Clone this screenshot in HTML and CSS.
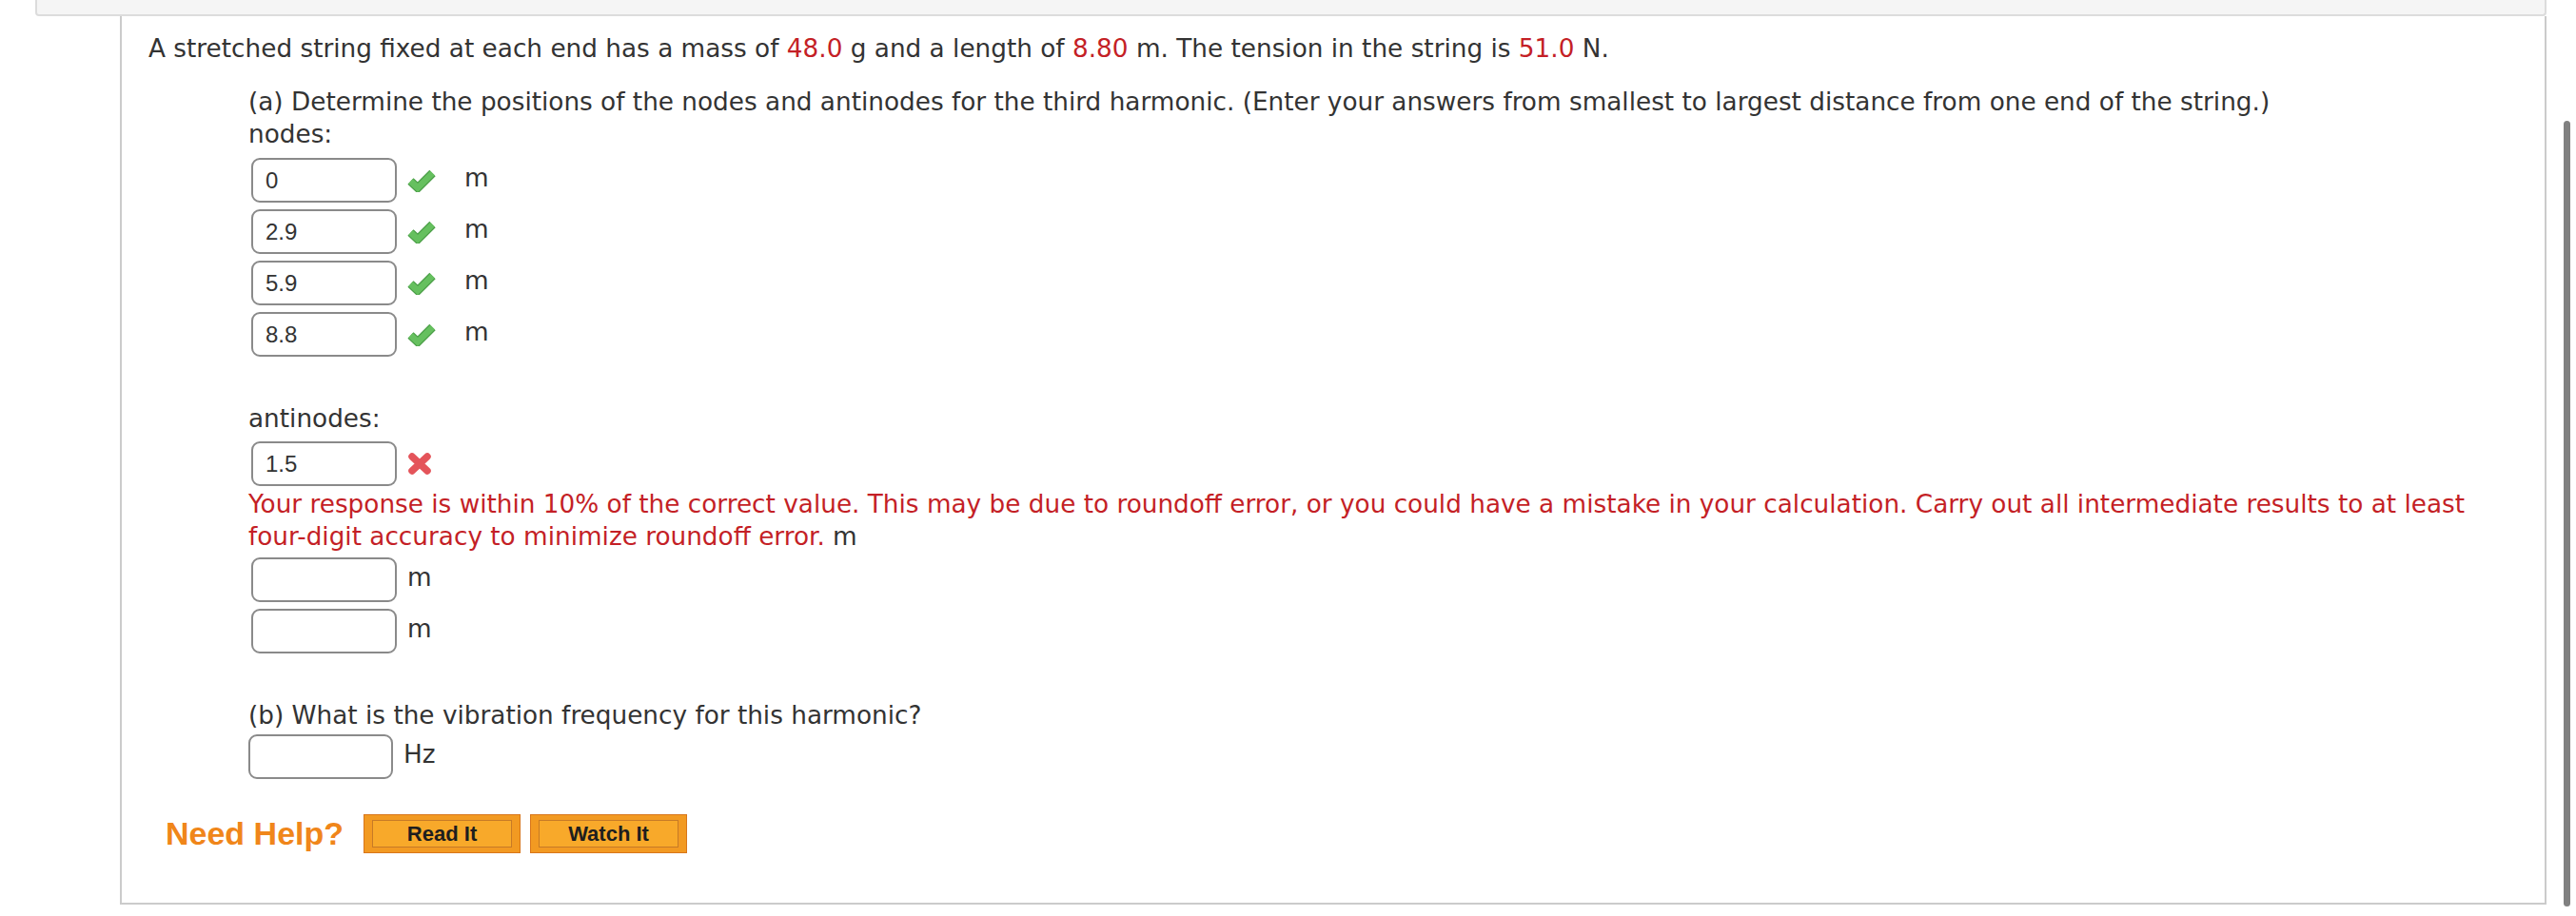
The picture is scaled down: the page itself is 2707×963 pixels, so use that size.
FILE: index.html
```html
<!DOCTYPE html>
<html lang="en">
<head>
    <meta charset="UTF-8">
    <meta name="viewport" content="width=device-width, initial-scale=1.0">
    <title>String Harmonics</title>
    <link rel="stylesheet" href="styles.css">
</head>
<body>
    <div class="topbar"></div>

    <div class="panel">
        <p class="stem">A stretched string fixed at each end has a mass of <span class="num">48.0</span> g and a length of <span class="num">8.80</span> m. The tension in the string is <span class="num">51.0</span> N.</p>

        <div class="part">
            <p>(a) Determine the positions of the nodes and antinodes for the third harmonic. (Enter your answers from smallest to largest distance from one end of the string.)</p>
            <p>nodes:</p>
            <div class="answers">
                <div class="answer">
                    <input class="box" type="text" value="0" readonly>
                    <svg class="mark" width="30" height="24" viewBox="0 0 30 24"><path d="M3.5 12.5 L11 19.5 L26.5 4" fill="none" stroke="#4b9e47" stroke-width="9"/><path d="M3.5 12.5 L11 19.5 L26.5 4" fill="none" stroke="#66c05f" stroke-width="6.5"/></svg>
                    <span class="unit wide">m</span>
                </div>
                <div class="answer">
                    <input class="box" type="text" value="2.9" readonly>
                    <svg class="mark" width="30" height="24" viewBox="0 0 30 24"><path d="M3.5 12.5 L11 19.5 L26.5 4" fill="none" stroke="#4b9e47" stroke-width="9"/><path d="M3.5 12.5 L11 19.5 L26.5 4" fill="none" stroke="#66c05f" stroke-width="6.5"/></svg>
                    <span class="unit wide">m</span>
                </div>
                <div class="answer">
                    <input class="box" type="text" value="5.9" readonly>
                    <svg class="mark" width="30" height="24" viewBox="0 0 30 24"><path d="M3.5 12.5 L11 19.5 L26.5 4" fill="none" stroke="#4b9e47" stroke-width="9"/><path d="M3.5 12.5 L11 19.5 L26.5 4" fill="none" stroke="#66c05f" stroke-width="6.5"/></svg>
                    <span class="unit wide">m</span>
                </div>
                <div class="answer">
                    <input class="box" type="text" value="8.8" readonly>
                    <svg class="mark" width="30" height="24" viewBox="0 0 30 24"><path d="M3.5 12.5 L11 19.5 L26.5 4" fill="none" stroke="#4b9e47" stroke-width="9"/><path d="M3.5 12.5 L11 19.5 L26.5 4" fill="none" stroke="#66c05f" stroke-width="6.5"/></svg>
                    <span class="unit wide">m</span>
                </div>
            </div>

            <p class="label">antinodes:</p>
            <div class="answer first">
                <input class="box" type="text" value="1.5" readonly>
                <svg class="mark" width="26" height="25" viewBox="0 0 26 25"><path d="M5 5 L21 20 M21 5 L5 20" fill="none" stroke="#e4545a" stroke-width="7.5" stroke-linecap="round"/></svg>
            </div>
            <p class="feedback">Your response is within 10% of the correct value. This may be due to roundoff error, or you could have a mistake in your calculation. Carry out all intermediate results to at least<br>four-digit accuracy to minimize roundoff error. <span class="plain">m</span></p>
            <div class="answers after-feedback">
                <div class="answer">
                    <input class="box" type="text" value="">
                    <span class="unit">m</span>
                </div>
                <div class="answer">
                    <input class="box" type="text" value="">
                    <span class="unit">m</span>
                </div>
            </div>

            <p class="label">(b) What is the vibration frequency for this harmonic?</p>
            <div class="answer hz">
                <input class="box" type="text" value="">
                <span class="unit">Hz</span>
            </div>
        </div>

        <div class="help">
            <span class="need-help">Need Help?</span>
            <button class="help-btn"><span>Read It</span></button>
            <button class="help-btn"><span>Watch It</span></button>
        </div>
    </div>

    <div class="scrollbar"></div>
</body>
</html>
```

FILE: styles.css
```css
/* Reset and base styles */
* {
    margin: 0;
    padding: 0;
    box-sizing: border-box;
}

body {
    font-family: "DejaVu Sans", Verdana, sans-serif;
    font-size: 26.3px;
    line-height: 34px;
    color: #333;
    background-color: #fff;
}

.topbar {
    height: 17px;
    margin: 0 31px 0 37px;
    background-color: #f5f5f5;
    border: 2px solid #dcdcdc;
    border-top: none;
    border-radius: 0 0 4px 4px;
}

.panel {
    margin: 0 31px 0 126px;
    border: 2px solid #cbcbcb;
    border-top: none;
    padding: 17px 28px 52px;
}

.num {
    color: #c41f26;
}

.part {
    margin-left: 105px;
    margin-top: 22px;
}

.answers {
    display: flex;
    flex-direction: column;
    gap: 7px;
    margin-top: 8px;
}

.answer {
    display: flex;
    align-items: center;
    height: 47px;
}

.box {
    width: 153px;
    height: 47px;
    margin-left: 3px;
    padding-left: 13px;
    border: 2px solid #8a8a8a;
    border-radius: 9px;
    background: #fff;
    font-family: "Liberation Sans", Arial, sans-serif;
    font-size: 24px;
    color: #333;
    outline: none;
}

.mark {
    margin-left: 11px;
    flex-shrink: 0;
}

.unit {
    margin-left: 11px;
    margin-bottom: 6px;
}

.unit.wide {
    margin-left: 30px;
}

.label {
    margin-top: 48px;
}

.answer.first {
    margin-top: 7px;
}

.feedback {
    margin-top: 2px;
    color: #c41f26;
}

.feedback .plain {
    color: #333;
}

.after-feedback {
    margin-top: 5px;
}

.answer.hz {
    margin-top: 3px;
}

.answer.hz .box {
    margin-left: 0;
    width: 152px;
}

.help {
    display: flex;
    align-items: center;
    margin-top: 37px;
    margin-left: 18px;
    height: 41px;
}

.need-help {
    font-family: "Liberation Sans", Arial, sans-serif;
    font-weight: bold;
    font-size: 34px;
    line-height: 41px;
    color: #f0861a;
    margin-right: 21px;
}

.help-btn {
    width: 165px;
    height: 41px;
    margin-right: 10px;
    padding: 5px 8px;
    background-color: #f29a22;
    border: 1px solid #d8761a;
    cursor: pointer;
}

.help-btn span {
    display: flex;
    align-items: center;
    justify-content: center;
    height: 100%;
    background-color: #f8a92a;
    border: 1px solid #c77a26;
    font-family: "Liberation Sans", Arial, sans-serif;
    font-weight: bold;
    font-size: 22px;
    color: #1e1e1e;
}

.scrollbar {
    position: fixed;
    top: 127px;
    right: 6px;
    bottom: 10px;
    width: 7px;
    border-radius: 4px;
    background-color: #808080;
}
```
